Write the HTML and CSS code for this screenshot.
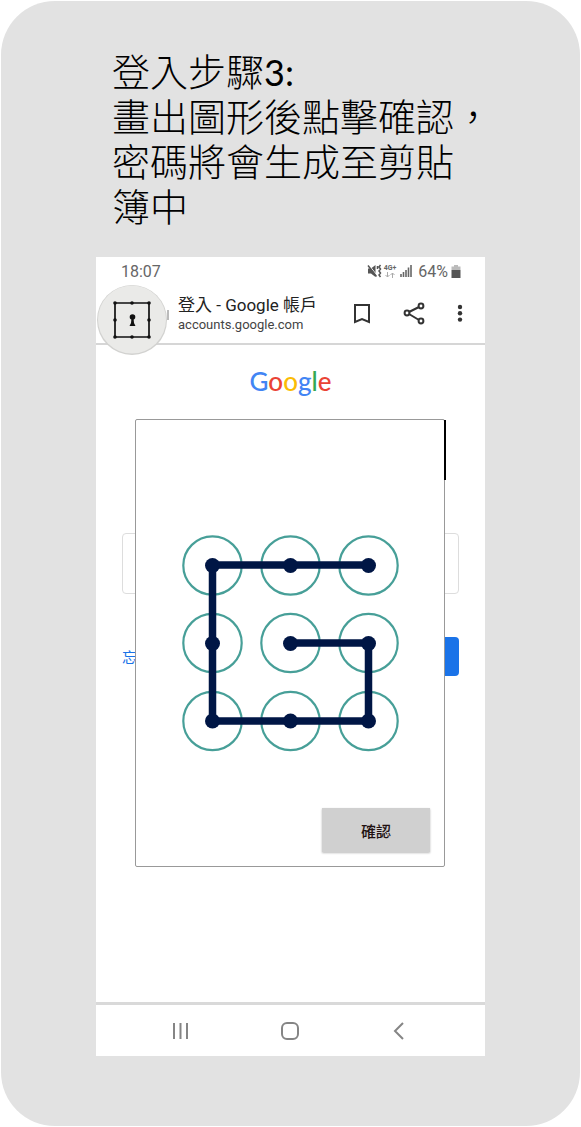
FILE: index.html
```html
<!DOCTYPE html>
<html lang="zh-Hant">
<head>
<meta charset="utf-8">
<meta name="viewport" content="width=device-width, initial-scale=1">
<title>登入步驟3</title>
<link rel="stylesheet" href="styles.css">
</head>
<body>
<main class="card">
  <h1 class="heading">登入步驟<span class="step">3:</span><br>畫出圖形後點擊確認，<br>密碼將會生成至剪貼<br>簿中</h1>

  <section class="phone">
    <div class="status">
      <span class="clock">18:07</span>
      <svg class="mute" width="15" height="14" viewBox="0 0 15 14" aria-hidden="true">
        <path d="M1 4.500h3L8.500 1v12L4 9.500H1z" fill="#555"/>
        <path d="M2 1l8.500 11" stroke="#fff" stroke-width="1"/>
        <path d="M1 1.500l8.500 11" stroke="#555" stroke-width="1.500"/>
        <path d="M13.500 1l-1.500 2 1.500 2-1.500 2 1.500 2-1.500 2 1.500 2M10.500 2v3" fill="none" stroke="#555" stroke-width="1.500"/>
      </svg>
      <span class="network"><span>4G+</span>
        <svg width="10" height="6" viewBox="0 0 10 6" aria-hidden="true"><path d="M2.500 0v5M.5 3l2 2 2-2M7.500 6V1M5.500 3l2-2 2 2" fill="none" stroke="#aaa"/></svg>
      </span>
      <svg class="signal" width="12" height="12" viewBox="0 0 12 12" aria-hidden="true">
        <path d="M1 9v3M3.500 7v5M6 5v7M8.500 2.500V12M11 0v12" stroke="#666" stroke-width="1.600"/>
      </svg>
      <span>64%</span>
      <svg class="battery" width="10" height="13" viewBox="0 0 10 13" aria-hidden="true">
        <path d="M3 0h4v1.500h2.500V5h-9V1.500H3z" fill="#bbb"/><path d="M.5 5h9v8h-9z" fill="#555"/>
      </svg>
    </div>

    <header class="toolbar">
      <svg class="badge" width="72" height="70" viewBox="0 0 72 70" aria-hidden="true">
        <path d="M72 25v10" stroke="#bbb" stroke-width="2"/>
        <circle cx="36" cy="35" r="35" fill="#d2d2d0"/>
        <circle cx="36" cy="34.500" r="34" fill="#eaeae8"/>
        <path d="M19 18h34v34H19z" fill="none" stroke="#111" stroke-width="1.700"/>
        <g fill="#111">
          <circle cx="19" cy="18" r="1.800"/><circle cx="36" cy="18" r="1.800"/><circle cx="53" cy="18" r="1.800"/>
          <circle cx="19" cy="35" r="1.800"/><circle cx="53" cy="35" r="1.800"/>
          <circle cx="19" cy="52" r="1.800"/><circle cx="36" cy="52" r="1.800"/><circle cx="53" cy="52" r="1.800"/>
          <circle cx="36.500" cy="32" r="2.800"/><path d="M35.500 33h2l.5 5 1.500 3h-6l1.500-3z"/>
        </g>
      </svg>
      <div class="site">
        <strong class="site-title">登入 - Google 帳戶</strong>
        <span class="site-url">accounts.google.com</span>
      </div>
      <div class="actions">
        <button class="icon-button" type="button" aria-label="書籤">
          <svg width="24" height="24" viewBox="0 0 24 24"><path d="M5 3h14v17l-7-3-7 3z" fill="none" stroke="#333" stroke-width="2"/></svg>
        </button>
        <button class="icon-button" type="button" aria-label="分享">
          <svg width="24" height="24" viewBox="0 0 24 24" fill="none" stroke="#333" stroke-width="2"><path d="M17 5L7 10M7 12l10 6"/><circle cx="19" cy="4" r="2.400"/><circle cx="5" cy="11" r="2.400"/><circle cx="19" cy="19" r="2.400"/></svg>
        </button>
        <button class="icon-button" type="button" aria-label="更多">
          <svg width="12" height="24" viewBox="0 0 12 24" fill="#333"><circle cx="6" cy="5" r="2.200"/><circle cx="6" cy="11.300" r="2.200"/><circle cx="6" cy="17.600" r="2.200"/></svg>
        </button>
      </div>
    </header>

    <div class="page">
      <div class="logo"><span class="blue">G</span><span class="red">o</span><span class="yellow">o</span><span class="blue">g</span><span class="green">l</span><span class="red">e</span></div>
      <form class="form">
        <input class="field" type="text" aria-label="電子郵件">
        <div class="form-row">
          <a class="forgot" href="#">忘</a>
          <button class="next" type="button" aria-label="下一步"></button>
        </div>
      </form>

      <div class="dialog" role="dialog">
        <svg class="pattern" width="216" height="216" viewBox="0 0 216 216" aria-hidden="true">
          <g fill="none" stroke="#479f98" stroke-width="2.200">
            <circle cx="30.500" cy="30.500" r="29.200"/><circle cx="108.500" cy="30.500" r="29.200"/><circle cx="186.500" cy="30.500" r="29.200"/>
            <circle cx="30.500" cy="108" r="29.200"/><circle cx="108.500" cy="108" r="29.200"/><circle cx="186.500" cy="108" r="29.200"/>
            <circle cx="30.500" cy="186" r="29.200"/><circle cx="108.500" cy="186" r="29.200"/><circle cx="186.500" cy="186" r="29.200"/>
          </g>
          <path d="M186.500 30H30.500V186H186.500V108H108.500" fill="none" stroke="#001645" stroke-width="7.500"/>
          <g fill="#001645">
            <circle cx="30.500" cy="30.500" r="7.500"/><circle cx="108.500" cy="30.500" r="7.500"/><circle cx="186.500" cy="30.500" r="7.500"/>
            <circle cx="30.500" cy="108.500" r="7.500"/><circle cx="108.500" cy="108.500" r="7.500"/><circle cx="186.500" cy="108.500" r="7.500"/>
            <circle cx="30.500" cy="186" r="7.500"/><circle cx="108.500" cy="186" r="7.500"/><circle cx="186.500" cy="186" r="7.500"/>
          </g>
        </svg>
        <button class="confirm" type="button">確認</button>
      </div>
    </div>

    <nav class="navbar">
      <button class="icon-button" type="button" aria-label="最近">
        <svg width="24" height="24" viewBox="0 0 24 24"><path d="M5 4v16M11.500 4v16M18 4v16" stroke="#858585" stroke-width="2"/></svg>
      </button>
      <button class="icon-button" type="button" aria-label="首頁">
        <svg width="24" height="24" viewBox="0 0 24 24"><rect x="4" y="4" width="16" height="16" rx="5" fill="none" stroke="#858585" stroke-width="2"/></svg>
      </button>
      <button class="icon-button" type="button" aria-label="返回">
        <svg width="24" height="24" viewBox="0 0 24 24"><path d="M16 4l-8 8 8 8" fill="none" stroke="#858585" stroke-width="2"/></svg>
      </button>
    </nav>
  </section>
</main>
</body>
</html>
```
FILE: styles.css
```css
* { box-sizing: border-box; }

body {
  margin: 0;
  padding: 1px;
  background: #fff;
  font-family: Roboto, "Noto Sans CJK TC", sans-serif;
}

svg { display: block; overflow: visible; }

button {
  border: 0;
  padding: 0;
  background: none;
  font-family: inherit;
}

.card {
  padding: 48px 95px 70px;
  border-radius: 54px;
  background: #e2e2e2;
}

.heading {
  margin: 0 -16px 28px 0;
  padding-left: 16px;
  color: #000;
  font-family: "Open Sans", "Noto Sans CJK TC", sans-serif;
  font-size: 38px;
  font-weight: 300;
  line-height: 45px;
}

.step {
  font-family: Lato, sans-serif;
  font-size: 36px;
  font-weight: 400;
  line-height: 1;
}

.phone { background: #fff; }

.status {
  display: flex;
  align-items: center;
  height: 28px;
  padding: 0 24px 0 25px;
  color: #666;
  font-size: 16px;
}

.clock { margin-right: auto; }

.network {
  display: flex;
  flex-direction: column;
  align-items: center;
  margin: 0 4px 0 2px;
  font-size: 7px;
  font-weight: 700;
  line-height: 8px;
}

.signal { margin-right: 6px; }

.battery { margin-left: 3px; }

.toolbar {
  display: flex;
  align-items: center;
  height: 60px;
  padding-right: 19px;
  border-bottom: 2px solid #d6d6d6;
}

.badge {
  position: relative;
  flex: none;
  align-self: flex-start;
}

.site {
  display: flex;
  flex-direction: column;
  margin-left: 10px;
  color: #222;
  white-space: nowrap;
}

.site-title {
  font-size: 17px;
  font-weight: 400;
  line-height: 22px;
}

.site-url {
  color: #444;
  font-size: 13px;
  line-height: 18px;
}

.actions {
  display: flex;
  gap: 28px;
  margin-left: auto;
}

.icon-button { display: block; }

.page {
  position: relative;
  min-height: 657px;
  padding: 16px 26px 0;
}

.logo {
  font-family: Lato, sans-serif;
  font-size: 26px;
  font-weight: 500;
  line-height: 40px;
  text-align: center;
}

.blue { color: #4285f4; }
.red { color: #ea4335; }
.yellow { color: #fbbc05; }
.green { color: #34a853; }

.form { margin-top: 132px; }

.field {
  display: block;
  width: 100%;
  height: 61px;
  border: 1px solid #ddd;
  border-radius: 4px;
  background: #fff;
}

.form-row {
  display: flex;
  align-items: center;
  justify-content: space-between;
  margin-top: 43px;
}

.forgot {
  color: #1a73e8;
  font-size: 15px;
  text-decoration: none;
}

.next {
  width: 80px;
  height: 39px;
  border-radius: 4px;
  background: #1a73e8;
}

.dialog {
  position: absolute;
  top: 74px;
  left: 39px;
  right: 40px;
  display: flex;
  flex-direction: column;
  align-items: center;
  padding: 115px 14px 14px;
  border: 1px solid #999;
  border-radius: 2px;
  background: #fff;
}

.dialog::after {
  content: "";
  position: absolute;
  top: 0;
  right: -2px;
  width: 2px;
  height: 60px;
  background: #000;
}

.confirm {
  align-self: flex-end;
  width: 108px;
  height: 44px;
  margin-top: 57px;
  background: #d0d0d0;
  box-shadow: 0 1px 2px #bbb;
  color: #211;
  font-size: 15px;
  font-weight: 500;
}

.navbar {
  display: flex;
  align-items: center;
  justify-content: center;
  gap: 85px;
  height: 54px;
  padding-right: 2px;
  border-top: 3px solid #d9d9d9;
}
```
